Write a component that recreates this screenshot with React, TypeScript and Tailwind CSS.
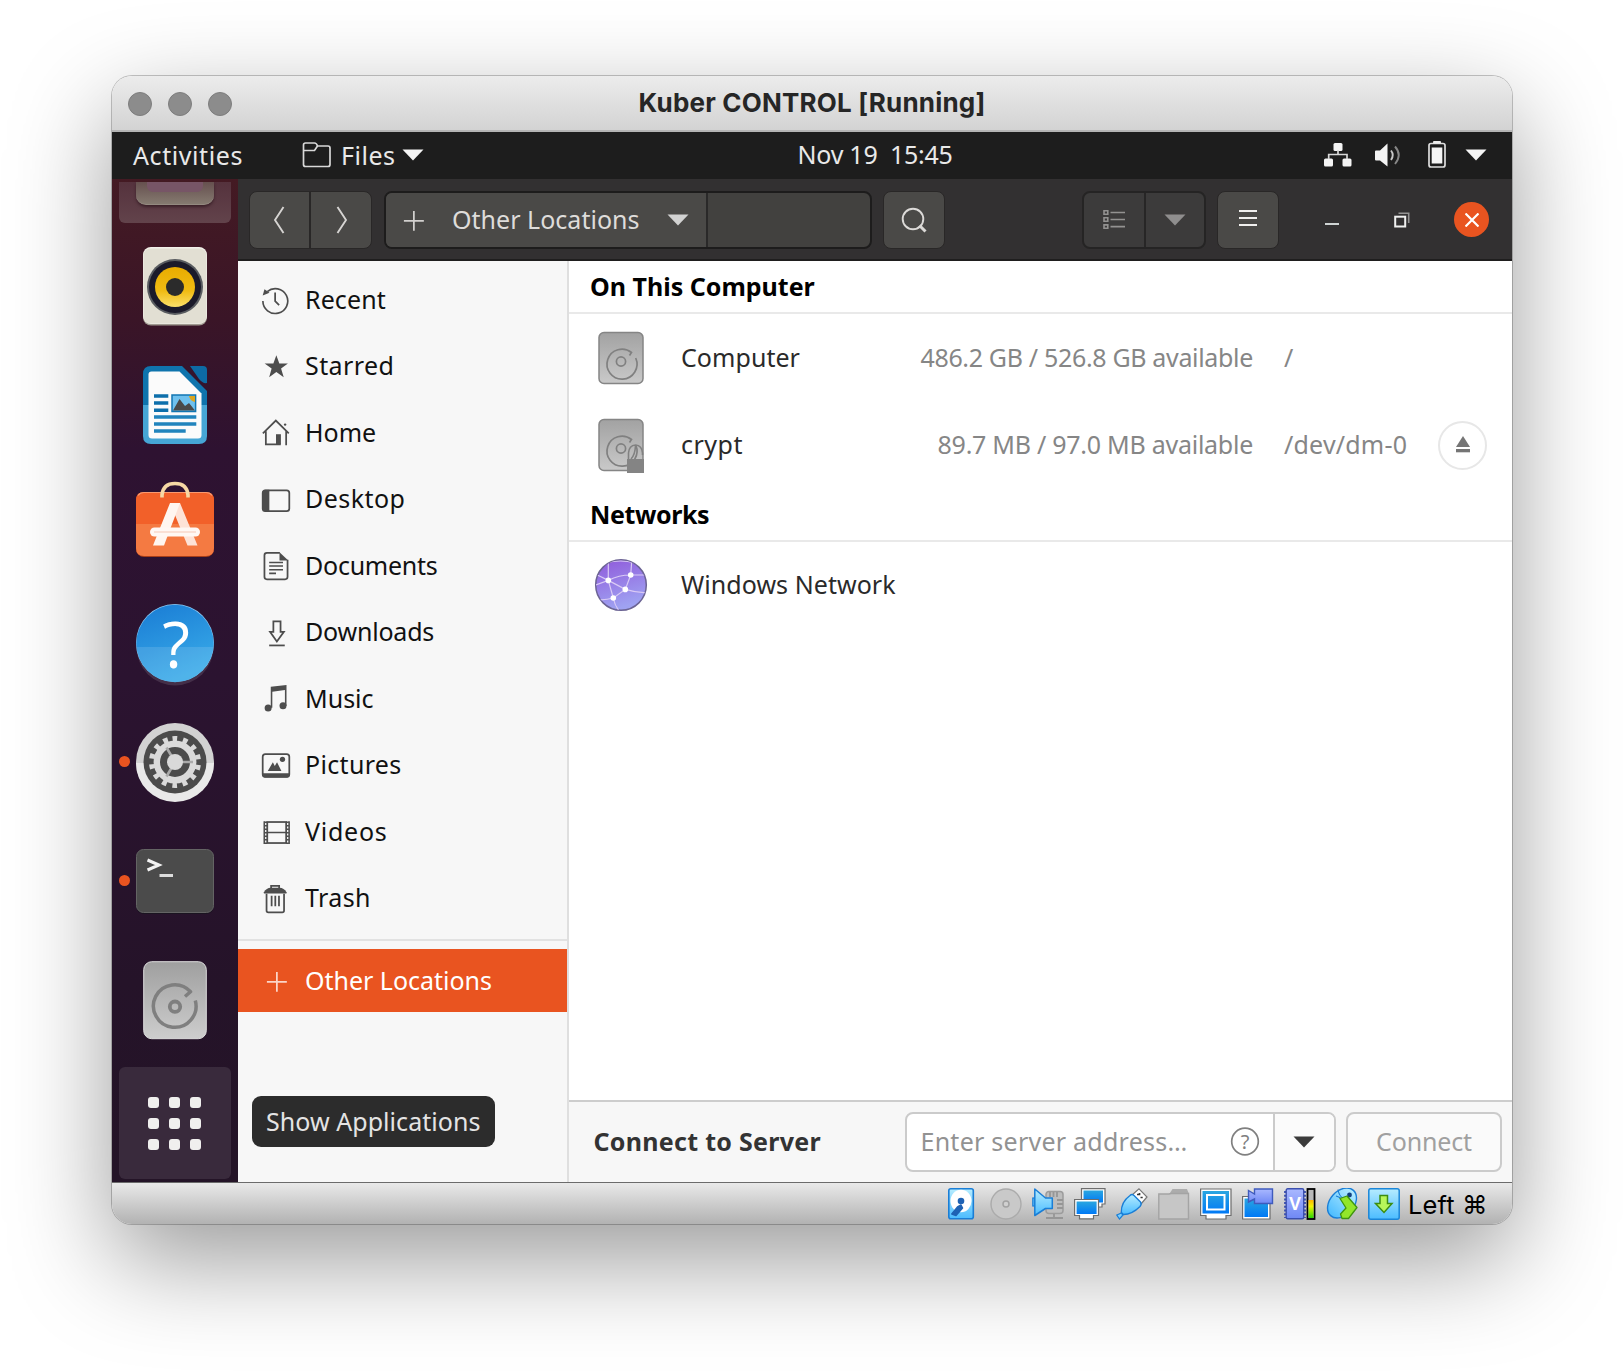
import type { ReactNode } from "react";

/* ---------- sidebar symbols, 16-unit grid ---------- */

function Sym({ children }: { children: ReactNode }) {
  return (
    <svg viewBox="0 0 16 16" className="h-7 w-7 shrink-0 overflow-visible" fill="none" stroke="#4d4d4d" strokeWidth="1">
      {children}
    </svg>
  );
}

const RecentIcon = () => (
  <Sym>
    <path d="M3 3.2A7.1 7.1 0 1 1 .5 8.6" strokeWidth=".95" />
    <path d="M1.4 1.9 4.3 3.9.4 5.4Z" fill="#4d4d4d" stroke="none" />
    <path d="M7.5 3.7v5l2.3 2.2" />
  </Sym>
);
const StarIcon = () => (
  <Sym>
    <path
      d="M8.2 1.3 9.9 6h4.9l-3.9 2.9 1.5 4.9-4.2-3-4.1 3L5.5 8.9 1.5 6h5Z"
      fill="#4d4d4d"
      stroke="none"
    />
  </Sym>
);
const HomeIcon = () => (
  <Sym>
    <path d="M.5 8.2 7.9.9l7.4 7.3M2.2 7v7.5h8.500M13.800 7v8" />
    <path d="M8 8.700h2.800v5.800H8Z" fill="#4d4d4d" stroke="none" />
    <circle cx="13.2" cy="3.2" r=".7" fill="#4d4d4d" stroke="none" />
  </Sym>
);
const DesktopIcon = () => (
  <Sym>
    <rect x=".4" y="2.5" width="15.2" height="11.8" rx="1.5" />
    <path d="M1.5 2.2H4.2V14.6H1.5L.1 13.4V3.4Z" fill="#4d4d4d" stroke="none" />
  </Sym>
);
const DocumentsIcon = () => (
  <Sym>
    <path d="M10.2.5H2.8Q1.4.5 1.4 1.9V14.2Q1.4 15.6 2.8 15.6H13.2Q14.6 15.6 14.6 14.2V4.4" />
    <path d="M10 .1V4.8H15Z" fill="#4d4d4d" stroke="none" />
    <path d="M4.1 6H12M4.1 8H12M4.1 10.1H12M4.1 12.2H8" strokeWidth=".9" />
  </Sym>
);
const DownloadsIcon = () => (
  <Sym>
    <path d="M6.5 1.3h4.1v6h1.9l-4 5.5-3.9-5.5h1.9Z" />
    <path d="M4.1 15.1H13" />
  </Sym>
);
const MusicIcon = () => (
  <Sym>
    <circle cx="3.5" cy="13.1" r="2" fill="#4d4d4d" stroke="none" />
    <circle cx="12" cy="11.9" r="2" fill="#4d4d4d" stroke="none" />
    <path d="M5 13V1L14 0V12H13.1V2.9L5.9 3.8V13Z" fill="#4d4d4d" stroke="none" />
  </Sym>
);
const PicturesIcon = () => (
  <Sym>
    <rect x=".4" y="1.2" width="15.2" height="13" rx="1.5" />
    <path d="M.1 12.1H15.9V13.4L14.7 14.6H1.3L.1 13.4Z" fill="#4d4d4d" stroke="none" />
    <path d="M3.3 10.9 6.2 5.9 7.3 8 8.6 5.9 11.1 10.9Z" fill="#4d4d4d" stroke="none" />
    <circle cx="11.7" cy="4.2" r="1.5" fill="#4d4d4d" stroke="none" />
  </Sym>
);
const VideosIcon = () => (
  <Sym>
    <rect x="3" y="2.3" width="10.8" height="12" />
    <path d="M3 8.3H13.8M1.3 1.8V14.8M15.5 1.8V14.8" strokeWidth=".9" />
    <path d="M2.2 2V14.8M14.6 2V14.8" strokeDasharray=".9 1.1" strokeWidth="1.5" />
  </Sym>
);
const TrashIcon = () => (
  <Sym>
    <path d="M5.2 2V.5H9.8V2" />
    <path d="M1.1 4.9V4.1Q2.5 1.6 5 1.5H10Q12.6 1.6 14 4.1V4.9Z" fill="#4d4d4d" stroke="none" />
    <path d="M2.6 5V14.6Q2.6 15.6 3.6 15.6H11.6Q12.6 15.6 12.6 14.6V5M5.5 6.2V12.2M7.6 6.2V12.2M9.7 6.2V12.2" />
  </Sym>
);
const PlusIcon = ({ color }: { color: string }) => (
  <svg viewBox="0 0 16 16" className="h-7 w-7 shrink-0" fill="none" stroke={color} strokeWidth="1">
    <path d="M2.8 8.5H14.2M8.5 2.8V14.2" />
  </svg>
);

const Caret = ({ color }: { color: string }) => (
  <svg viewBox="0 0 22 12" className="h-3 w-[22px] shrink-0">
    <path d="M.5.5H21.5L11 11.5Z" fill={color} />
  </svg>
);

/* ---------- dock launchers, 84px tiles ---------- */

function Tile({ children }: { children: ReactNode }) {
  return (
    <svg viewBox="0 0 84 84" className="h-[84px] w-[84px] overflow-visible" fill="none">
      {children}
    </svg>
  );
}

const MusicPlayer = () => (
  <Tile>
    <defs>
      <linearGradient id="cone" x1="0" y1="0" x2="0" y2="1">
        <stop offset="0" stopColor="#e9ac00" />
        <stop offset=".6" stopColor="#f0bb13" />
        <stop offset="1" stopColor="#fbe06a" />
      </linearGradient>
    </defs>
    <rect x="10" y="3.5" width="64" height="78" rx="8" fill="#a09a90" />
    <rect x="10" y="3" width="64" height="77" rx="8" fill="#f2f0ea" />
    <rect x="10.5" y="4.5" width="63" height="75" rx="7" fill="#e2dfd3" />
    <circle cx="42" cy="43" r="28" fill="#595c60" />
    <circle cx="42" cy="43" r="26" fill="#1b1a2a" />
    <circle cx="42" cy="43" r="20" fill="url(#cone)" />
    <circle cx="42" cy="43" r="9" fill="#2b2b2b" />
  </Tile>
);
const Writer = () => (
  <Tile>
    <path d="M18 3H49L74 28V42H10V11Q10 3 18 3Z" fill="#0f74ad" />
    <path d="M10 42H74V73Q74 81 66 81H18Q10 81 10 73Z" fill="#46a6d5" />
    <path d="M57 3H70Q74 3 74 7V20Q70 21 66 16Z" fill="#0d6ba4" />
    <path d="M18.5 8.5H46.5L68.5 30.5V72Q68.5 75.5 65 75.5H19Q15.5 75.5 15.5 72V11.5Q15.5 8.5 18.5 8.5Z" fill="#fbfbfb" />
    <path d="M21 33H35.3M21 40H35.3M21 47.2H35.3" stroke="#0d6fab" strokeWidth="3.4" />
    <path d="M21 54H63.3M21 61H63.3M21 68H52.7" stroke="#2184bd" strokeWidth="3.4" />
    <rect x="39" y="32" width="23.6" height="16.5" fill="#6fc1ee" stroke="#1276b2" strokeWidth="1.5" />
    <path d="M40 47.5 46.5 36 52 43 56 40 62 47.5Z" fill="#4a4a4a" />
    <path d="M56 33H62V39Q57 38 56 33Z" fill="#dba520" />
  </Tile>
);
const Software = () => (
  <Tile>
    <rect x="3" y="11" width="78" height="64" rx="8" fill="#a93e17" />
    <path d="M11 10H73Q81 10 81 18V42H3V18Q3 10 11 10Z" fill="#f26029" />
    <path d="M3 42H81V66Q81 74 73 74H11Q3 74 3 66Z" fill="#f47a42" />
    <path d="M5 13.5Q7 10.5 11 10.5H73Q77 10.5 79 13.5" stroke="#f99a70" strokeWidth="1.2" />
    <path d="M29 15.5V13Q30 1.5 42 1.5T55 13V15.5" stroke="#f6d8a4" strokeWidth="3.6" />
    <path d="M37 21H47L64.5 63.5H54.5L42 33Z" fill="#fde3d7" />
    <path d="M37 21H47L31 63.5H20Z" fill="#fff6f0" />
    <rect x="17" y="45.5" width="50" height="9" rx="4.5" fill="#fff8f4" />
    <path d="M21 50H63" stroke="#f8d9cb" strokeWidth="1.5" />
  </Tile>
);
const Help = () => (
  <Tile>
    <defs>
      <linearGradient id="help" x1="0" y1="0" x2=".4" y2="1">
        <stop offset="0" stopColor="#197bd4" />
        <stop offset="1" stopColor="#37a9e8" />
      </linearGradient>
    </defs>
    <circle cx="42" cy="42" r="39" fill="#8cc8f2" />
    <circle cx="42" cy="42.5" r="38.7" fill="url(#help)" />
    <path d="M3.5 46H80.5A38.5 38.5 0 0 1 3.5 46Z" fill="#fff" opacity=".12" />
    <text x="43" y="67" textAnchor="middle" className="font-['Open_Sans'] text-[64px]" fill="#fff">
      ?
    </text>
  </Tile>
);
const Settings = () => (
  <Tile>
    <circle cx="42" cy="42" r="39" fill="#d2d2d2" />
    <path d="M3 43A39 39 0 0 0 81 43Z" fill="#e9e9e9" />
    <circle cx="42" cy="42" r="31.5" fill="#4b4b4b" />
    <circle cx="42" cy="42" r="23" stroke="#d9d9d9" strokeWidth="6" strokeDasharray="4.6 5.722" transform="rotate(-96 42 42)" />
    <circle cx="42" cy="42" r="18.2" stroke="#dadada" strokeWidth="6.4" />
    <path d="M42 42H60M42 42 33.5 27.5M42 42 33.5 56.5" stroke="#a9a9a9" strokeWidth="2.6" />
    <circle cx="42" cy="42" r="8" fill="#d9d9d9" />
  </Tile>
);
const Terminal = () => (
  <Tile>
    <rect x="3" y="11" width="78" height="64" rx="8" fill="#1a1420" />
    <rect x="3.5" y="10.5" width="77" height="63" rx="7" fill="#4b4b4b" stroke="#646464" />
    <path d="M14.5 21 26 26 14.5 31" stroke="#f4f4f4" strokeWidth="3" />
    <path d="M26.5 36.5H40" stroke="#dcdcdc" strokeWidth="3" />
  </Tile>
);
const Disk = () => (
  <Tile>
    <defs>
      <linearGradient id="disk" x1="0" y1="0" x2="0" y2="1">
        <stop offset="0" stopColor="#9f9f9f" />
        <stop offset="1" stopColor="#cdcdcd" />
      </linearGradient>
    </defs>
    <rect x="10.7" y="3.7" width="62.6" height="77" rx="8" fill="url(#disk)" stroke="#dcdcdc" />
    <path d="M52 38.5 57.5 33.7A21.3 21.3 0 1 0 62.3 42.5" stroke="#7f7f7f" strokeWidth="3.5" strokeLinejoin="round" />
    <circle cx="42" cy="48.7" r="5.2" stroke="#7f7f7f" strokeWidth="3.8" />
  </Tile>
);

const dockItems: { name: string; icon: ReactNode; running?: boolean }[] = [
  { name: "Rhythmbox", icon: <MusicPlayer /> },
  { name: "LibreOffice Writer", icon: <Writer /> },
  { name: "Ubuntu Software", icon: <Software /> },
  { name: "Help", icon: <Help /> },
  { name: "Settings", icon: <Settings />, running: true },
  { name: "Terminal", icon: <Terminal />, running: true },
  { name: "Disk", icon: <Disk /> },
];

function Dock() {
  return (
    <nav className="flex w-[126px] shrink-0 flex-col items-center bg-[linear-gradient(180deg,#441a23_0%,#3a1527_14%,#2e1231_27%,#2b1330_50%,#251329_80%,#241427_100%)]">
      <div className="mt-[3px] flex h-[41px] w-28 justify-center rounded-b-md bg-linear-to-b from-[#55323d] to-[#62434b]">
        <div className="flex h-[23px] w-[78px] justify-center rounded-b-[10px] border-b border-[#948a80] bg-linear-to-b from-[#66504f] to-[#857a70] shadow-[0_2px_3px_#3a2028]">
          <div className="h-[10px] w-14 rounded-b-md bg-[#775566]" />
        </div>
      </div>
      <div className="mt-[3px] w-full">
        {dockItems.map((d) => (
          <div key={d.name} aria-label={d.name} className="grid h-[119px] grid-cols-[21px_84px_21px] items-center">
            <span className="flex justify-end pr-[3px]">
              {d.running && <span className="h-[11px] w-[11px] rounded-full bg-[#e95420]" />}
            </span>
            {d.icon}
          </div>
        ))}
      </div>
      <div className="mt-[8px] grid h-28 w-28 place-content-center rounded-md bg-[#392a3c]">
        <div className="mr-px grid grid-cols-3 gap-[10px]">
          {Array.from({ length: 9 }, (_, i) => (
            <span key={i} className="h-[11px] w-[11px] rounded-[3px] bg-[#f0efee]" />
          ))}
        </div>
      </div>
    </nav>
  );
}

/* ---------- GNOME top panel ---------- */

function TopPanel() {
  return (
    <div className="flex h-[47px] items-center bg-[#1d1d1d] pb-[2px] text-[#e9e9e9]">
      <span className="ml-[21px] w-[169px] tracking-[0.58px]">Activities</span>
      <svg viewBox="0 0 29 26" className="h-[26px] w-[29px]" fill="none" stroke="#d8d8d8" strokeWidth="1.7">
        <path d="M1.5 9V3Q1.5 1 3.5 1H12.5Q14.5 1 15.5 4H26Q28 4 28 6V22.5Q28 24.5 26 24.5H3.5Q1.5 24.5 1.5 22.5V8.5H12.5L15.5 4" />
      </svg>
      <span className="ml-[10px] w-[60.5px] tracking-[0.5px]">Files</span>
      <Caret color="#f5f5f5" />
      <span className="mb-[2px] ml-[374px] w-[526.5px] tracking-[-0.25px] whitespace-pre">Nov 19  15:45</span>
      <svg viewBox="0 0 28 26" className="h-[26px] w-7" fill="#f4f4f4">
        <rect x="9.5" y="1" width="9" height="8" rx="1.5" />
        <rect x="0" y="16.5" width="9" height="8" rx="1.5" />
        <rect x="18.5" y="16.5" width="9" height="8" rx="1.5" />
        <path d="M14 8V12.5M4.7 17V12.5H23V17" fill="none" stroke="#d8d8d8" strokeWidth="1.7" />
      </svg>
      <svg viewBox="0 0 28 26" className="ml-[22px] h-[26px] w-7" fill="#f4f4f4">
        <path d="M2 8.5H6L13.5 1.5V24.5L6 18.5H2Q1 18.5 1 17.5V9.5Q1 8.5 2 8.5Z" />
        <path d="M17 8.5Q20.5 13 17 18" fill="none" stroke="#c8c8c8" strokeWidth="1.9" />
        <path d="M21 4.5Q28.5 13 21 22" fill="none" stroke="#868686" strokeWidth="1.9" />
      </svg>
      <svg viewBox="0 0 20 28" className="mb-[2px] ml-[24.5px] h-7 w-5" fill="none">
        <rect x="2" y="3.5" width="16" height="23.5" rx="2" stroke="#dedede" strokeWidth="1.7" />
        <rect x="6" y="1" width="8" height="2.5" rx="1" fill="#eee" />
        <rect x="4.7" y="7.5" width="10.6" height="16" fill="#f4f4f4" />
      </svg>
      <span className="ml-[18.5px]">
        <Caret color="#f5f5f5" />
      </span>
    </div>
  );
}

/* ---------- Files header bar ---------- */

function HeaderBar() {
  return (
    <header className="flex h-[82px] items-start border-b-2 border-[#1f1e1e] bg-[#323031] pt-[12px] text-[#dedcda]">
      <div className="ml-[11px] flex h-[58px] rounded-lg border border-[#292727] bg-[#4a4947]">
        <span className="grid w-[61px] place-items-center border-r-2 border-[#292727] pr-[2px]">
          <svg viewBox="0 0 12 28" className="h-7 w-3" fill="none" stroke="#d6d4d2" strokeWidth="1.9">
            <path d="M10.5 1 2 14 10.5 27" />
          </svg>
        </span>
        <span className="grid w-[60px] place-items-center pl-[2px]">
          <svg viewBox="0 0 12 28" className="h-7 w-3" fill="none" stroke="#d6d4d2" strokeWidth="1.9">
            <path d="M1.5 1 10 14 1.5 27" />
          </svg>
        </span>
      </div>

      <div className="ml-[12px] flex h-[58px] w-[488px] overflow-hidden rounded-lg border-2 border-[#1d1c1c] bg-[#42413f]">
        <div className="flex w-[322px] items-center border-r-2 border-[#2a2929] bg-[#4a4947] pl-[13px]">
          <PlusIcon color="#d2d0ce" />
          <span className="mb-[3px] ml-[24px] w-[215.5px] pl-px tracking-[0.02px]">Other Locations</span>
          <Caret color="#d2d2d2" />
        </div>
      </div>

      <div className="ml-[11px] grid h-[58px] w-[62px] place-items-center rounded-lg border border-[#292727] bg-[#4a4947]">
        <svg viewBox="0 0 26 26" className="mb-px h-[26px] w-[26px]" fill="none" stroke="#dcdad8">
          <circle cx="12" cy="12" r="10.3" strokeWidth="1.9" />
          <path d="M18.5 18.5 24.5 24.5" strokeWidth="3" />
        </svg>
      </div>

      <div className="ml-[136.5px] flex h-[58px] w-[124px] overflow-hidden rounded-lg border-2 border-[#252424] bg-[#3c3b3b]">
        <span className="grid w-[62px] place-items-center border-r-2 border-[#272626] pb-px">
          <svg viewBox="0 0 22 22" className="h-[22px] w-[22px]" fill="none" stroke="#939291" strokeWidth="1.6">
            <path d="M1 1.8H4.8V5.2H1ZM1 8.8H4.8V12.2H1ZM1 15.9H4.8V19.3H1ZM7.5 3.5H22M7.5 10.5H22M7.5 17.6H22" />
          </svg>
        </span>
        <span className="grid flex-1 place-items-center">
          <Caret color="#8f8e8e" />
        </span>
      </div>

      <div className="ml-[11.5px] grid h-[58px] w-[62px] place-items-center rounded-lg border border-[#292727] bg-[#4a4947]">
        <svg viewBox="0 0 18 18" className="mb-[4px] h-[18px] w-[18px]" stroke="#f0efee" strokeWidth="2">
          <path d="M0 2H18M0 9H18M0 16H18" />
        </svg>
      </div>

      <div className="flex h-[58px] flex-1 items-center pb-px">
        <span className="mt-[9px] ml-[46px] h-[2px] w-[14px] bg-[#cfd3d3]" />
        <svg viewBox="0 0 16 16" className="ml-[55px] h-4 w-4" fill="none">
          <path d="M4.5 1.2H14.7V11" stroke="#949393" strokeWidth="1.6" />
          <rect x="1.2" y="4.7" width="10" height="9.8" stroke="#f0f0f0" strokeWidth="2" />
        </svg>
        <span className="ml-[44px] grid h-[35px] w-[35px] place-items-center rounded-full bg-[#e95420]">
          <svg viewBox="0 0 14 14" className="h-[14px] w-[14px]" stroke="#fff" strokeWidth="2.2">
            <path d="M.5.5 13.5 13.5M13.5.5.5 13.5" />
          </svg>
        </span>
      </div>
    </header>
  );
}

/* ---------- Files sidebar ---------- */

function Place({ icon, children }: { icon: ReactNode; children: ReactNode }) {
  return (
    <div className="flex h-[66.5px] items-center gap-[15px] pl-[24px]">
      {icon}
      <span className="pb-[3px]">{children}</span>
    </div>
  );
}

function Sidebar() {
  return (
    <aside className="flex w-[331px] shrink-0 flex-col border-r-2 border-[#dfdfdf] bg-[#f7f7f7] pt-[6px] text-[#111]">
      <Place icon={<RecentIcon />}>
        <span className="tracking-[0.1px]">Recent</span>
      </Place>
      <Place icon={<StarIcon />}>
        <span className="tracking-[0.4px]">Starred</span>
      </Place>
      <Place icon={<HomeIcon />}>
        <span className="tracking-[0px]">Home</span>
      </Place>
      <Place icon={<DesktopIcon />}>
        <span className="tracking-[0.45px]">Desktop</span>
      </Place>
      <Place icon={<DocumentsIcon />}>
        <span className="tracking-[-0.25px]">Documents</span>
      </Place>
      <Place icon={<DownloadsIcon />}>
        <span className="tracking-[-0.2px]">Downloads</span>
      </Place>
      <Place icon={<MusicIcon />}>
        <span>Music</span>
      </Place>
      <Place icon={<PicturesIcon />}>
        <span className="tracking-[0.32px]">Pictures</span>
      </Place>
      <Place icon={<VideosIcon />}>
        <span className="tracking-[0.75px]">Videos</span>
      </Place>
      <Place icon={<TrashIcon />}>
        <span className="tracking-[0.38px]">Trash</span>
      </Place>
      <div className="mt-[7px] border-t-2 border-[#e2e2e2]" />
      <div className="mt-[8px] flex h-[63px] items-center gap-[15px] bg-[#e95420] pl-[24px] text-white">
        <PlusIcon color="#fbd5c8" />
        <span className="pb-[2px] tracking-[-0.02px]">Other Locations</span>
      </div>
    </aside>
  );
}

/* ---------- Locations list ---------- */

function DriveIcon({ locked }: { locked?: boolean }) {
  return (
    <svg viewBox="0 0 56 56" className="h-14 w-14" fill="none">
      <defs>
        <linearGradient id="drive" x1="0" y1="0" x2="0" y2="1">
          <stop offset="0" stopColor="#a2a2a2" />
          <stop offset="1" stopColor="#c9c9c9" />
        </linearGradient>
      </defs>
      <rect x="6" y="2.5" width="44" height="51" rx="5" fill="url(#drive)" stroke="#858585" strokeWidth="1.5" />
      <path d="M36.5 25.5 38.5 22.5A15 15 0 1 0 42.7 28" stroke="#808080" strokeWidth="1.7" />
      <circle cx="28" cy="31.5" r="4.6" stroke="#808080" strokeWidth="1.7" />
      {locked && (
        <>
          <path d="M35.5 42V36Q36 28.5 42.5 28Q49 28.5 49.5 36V38M38 42Q42 38 42.5 29" stroke="#818181" strokeWidth="1.6" />
          <rect x="34" y="42" width="17" height="14" fill="#848484" />
        </>
      )}
    </svg>
  );
}

const GlobeIcon = () => (
  <svg viewBox="0 0 56 56" className="h-14 w-14" fill="none">
    <defs>
      <linearGradient id="globe" x1="0" y1="0" x2=".3" y2="1">
        <stop offset="0" stopColor="#8f58da" />
        <stop offset="1" stopColor="#9fa2f2" />
      </linearGradient>
      <clipPath id="globeClip">
        <circle cx="28" cy="28" r="25" />
      </clipPath>
    </defs>
    <circle cx="28" cy="28" r="25.3" fill="url(#globe)" stroke="#6c6494" strokeWidth="1.5" />
    <g clipPath="url(#globeClip)" stroke="#d9caf5" strokeWidth="1.2">
      <path d="M15.3 0V23.4L20.3 41Q22 50 28 56M39 0 37.7 18 32.300 32.400 20.300 41Q10 44 0 42M0 16 15.300 23.400 32.300 32.400Q44 36 56 36M0 29 15.300 23.400Q26 18 37.700 18H56M12 6Q28 2 42 6" />
    </g>
    <g fill="#fff">
      <circle cx="15.3" cy="23.4" r="2.8" />
      <circle cx="37.7" cy="18" r="2.8" />
      <circle cx="32.3" cy="32.4" r="2.8" />
      <circle cx="20.3" cy="41" r="2.8" />
    </g>
  </svg>
);

function Locations() {
  return (
    <section className="flex-1">
      <h2 className="h-[53px] border-b-2 border-[#e9e9e9] pl-[21px] leading-[51px] font-bold text-black">On This Computer</h2>
      <div className="flex h-[87.5px] items-center pl-[24px] text-[#868686]">
        <DriveIcon />
        <span className="ml-[32px] w-[239px] pb-[2px] tracking-[0.05px] text-[#2a2a2a]">Computer</span>
        <span className="w-[333px] pb-[2px] text-right tracking-[-0.33px]">486.2 GB / 526.8 GB available</span>
        <span className="ml-[31px] pb-[2px]">/</span>
      </div>
      <div className="flex h-[87.5px] items-center pl-[24px] text-[#868686]">
        <DriveIcon locked />
        <span className="ml-[32px] w-[239px] pb-[2px] tracking-[0.5px] text-[#2a2a2a]">crypt</span>
        <span className="w-[333px] pb-[2px] text-right tracking-[-0.26px]">89.7 MB / 97.0 MB available</span>
        <span className="ml-[31px] w-[154px] pb-[2px] tracking-[0.2px]">/dev/dm-0</span>
        <span className="grid h-[49px] w-[49px] place-items-center rounded-full border-2 border-[#e7e7e7] bg-white">
          <svg viewBox="0 0 16 18" className="h-[18px] w-4" fill="#757575">
            <path d="M8 0 15 11H1Z" />
            <rect x="1" y="13" width="14" height="3.3" />
          </svg>
        </span>
      </div>
      <h2 className="h-[52.5px] border-b-2 border-[#e9e9e9] pl-[21px] leading-[51px] font-bold tracking-[-0.4px] text-black">
        Networks
      </h2>
      <div className="flex h-[87.5px] items-center pl-[24px]">
        <GlobeIcon />
        <span className="ml-[32px] pb-[2px] tracking-[0.05px] text-[#2a2a2a]">Windows Network</span>
      </div>
    </section>
  );
}

function ConnectBar() {
  return (
    <div className="flex h-[82px] items-start border-t-2 border-[#cdcdcd] bg-[#f7f7f7] pt-[10px]">
      <span className="ml-[24.5px] w-[311px] leading-[58px] font-bold tracking-[0.29px] text-[#333]">Connect to Server</span>
      <div className="flex h-[60px] w-[431px] overflow-hidden rounded-lg border-2 border-[#cbcbcb] bg-white">
        <div className="flex w-[368px] items-center border-r-2 border-[#cbcbcb] pl-[14px] text-[#929292]">
          <span className="w-[309px] pb-[3px] tracking-[0.25px]">Enter server address…</span>
          <svg viewBox="0 0 30 30" className="h-[30px] w-[30px] overflow-visible" fill="none">
            <circle cx="15" cy="14.5" r="13.3" stroke="#808080" strokeWidth="1.7" />
            <text x="15" y="21.5" textAnchor="middle" className="font-['Noto_Sans'] text-[20px]" fill="#808080">
              ?
            </text>
          </svg>
        </div>
        <span className="grid flex-1 place-items-center bg-[#fbfbfb] pr-px">
          <Caret color="#3b3b3b" />
        </span>
      </div>
      <div className="ml-[10.5px] h-[60px] w-[156px] rounded-lg border-2 border-[#cbcbcb] bg-[#fafafa] text-center leading-[54px] tracking-[-0.15px] text-[#a0a0a0]">
        Connect
      </div>
    </div>
  );
}

/* ---------- VirtualBox status bar ---------- */

function Ind({ children }: { children: ReactNode }) {
  return (
    <svg viewBox="0 0 32 32" className="h-8 w-8 shrink-0" fill="none">
      {children}
    </svg>
  );
}

const IndicatorPaints = () => (
  <svg className="absolute h-0 w-0">
    <defs>
      <linearGradient id="sky" x1="0" y1="0" x2="0" y2="1">
        <stop offset="0" stopColor="#b6ecff" />
        <stop offset="1" stopColor="#4bbcff" />
      </linearGradient>
      <linearGradient id="screen" x1="0" y1="0" x2="0" y2="1">
        <stop offset="0" stopColor="#2aa6e0" />
        <stop offset="1" stopColor="#0079f6" />
      </linearGradient>
      <linearGradient id="violet" x1="0" y1="0" x2="0" y2="1">
        <stop offset="0" stopColor="#a9b8ff" />
        <stop offset="1" stopColor="#6f88f5" />
      </linearGradient>
      <linearGradient id="load" x1="0" y1="0" x2="0" y2="1">
        <stop offset="0" stopColor="#ffb400" />
        <stop offset=".35" stopColor="#f4f400" />
        <stop offset="1" stopColor="#2cd800" />
      </linearGradient>
    </defs>
  </svg>
);

function StatusBar() {
  return (
    <footer className="relative flex h-[42px] items-center gap-[10px] border-t border-[#6b6b6b] bg-linear-to-b from-[#e9e9e9] to-[#b2b2b2] pl-[836px]">
      <IndicatorPaints />
      <Ind>
        <rect x=".8" y=".8" width="24.5" height="30" rx="2" fill="url(#sky)" stroke="#1a7ed6" strokeWidth="1.6" />
        <ellipse cx="13" cy="13" rx="10.5" ry="11.3" fill="#fff" />
        <circle cx="13" cy="13" r="3.3" fill="#1e62b4" />
        <path d="M13 17 9.5 19 3.8 26 8 27.5 14.5 20Z" fill="#1e62b4" stroke="#1e62b4" strokeWidth="1.5" strokeLinejoin="round" />
      </Ind>
      <Ind>
        <circle cx="16" cy="16" r="15" fill="#c9c9c9" stroke="#ababab" strokeWidth="1.4" />
        <circle cx="16" cy="16" r="3" stroke="#a2a2a2" strokeWidth="1.5" fill="#d0d0d0" />
      </Ind>
      <Ind>
        <rect x="14" y="3.5" width="17" height="22" rx="3" fill="#bdbdbd" stroke="#9c9c9c" strokeWidth="1.5" />
        <path d="M18 4V9M21.5 4V9M25 4V9M25 12H31M25 16H31M25 20H31M22 26V29M14 30H31" stroke="#969696" strokeWidth="1.8" />
        <rect x=".8" y="10" width="3" height="8" fill="#5fc4ff" stroke="#1a7ed6" strokeWidth="1.2" />
        <path d="M2.8 1 13.5 10H20.3V20.5H13.5L2.8 27.5Z" fill="url(#sky)" stroke="#1a7ed6" strokeWidth="1.5" strokeLinejoin="round" />
      </Ind>
      <Ind>
        <path d="M7.5.6H31V16H28V19H22L7.5 16Z" fill="#fff" stroke="#6d6d6d" strokeWidth="1.2" />
        <rect x="9.5" y="2.5" width="19.5" height="12" fill="url(#screen)" />
        <path d="M.6 11.5H24.5V27.5H19.5V30.8H5.5V27.5H.6Z" fill="#fff" stroke="#6d6d6d" strokeWidth="1.2" />
        <rect x="2.6" y="13.5" width="20" height="12.5" fill="url(#screen)" />
      </Ind>
      <Ind>
        <path d="M23 .8 31 9 25 16 16 7Z" fill="#fff" stroke="#777" strokeWidth="1.2" />
        <path d="M21 6.5h2.2M24.5 9.5h2.2M23.5 5v2.2" stroke="#333" strokeWidth="1.7" />
        <path d="M14 7.5Q16 5.5 18 7.5L24.5 14Q26 16 24 18.5Q16 26.5 7.5 26.5L5.3 24.5Q5 14 14 7.5Z" fill="url(#sky)" stroke="#1a7ed6" strokeWidth="1.4" />
        <path d="M5.3 25 .8 27 3.5 31 7 27Z" fill="#7ad0ff" stroke="#1a7ed6" strokeWidth="1.2" />
      </Ind>
      <Ind>
        <path d="M12 5 14.5 1H29L30.5 5Z" fill="#acacac" />
        <path d="M.8 6H11L13 5.5H30.5V31H.8Z" fill="#c6c6c6" stroke="#a4a4a4" strokeWidth="1.4" />
      </Ind>
      <Ind>
        <path d="M.6 1H31V27.5H26V31H6V27.5H.6Z" fill="#fff" stroke="#6d6d6d" strokeWidth="1.2" />
        <rect x="2.5" y="3" width="26.5" height="22.5" fill="url(#screen)" />
        <rect x="7" y="7" width="17.500" height="14.500" stroke="#fff" strokeWidth="2" />
      </Ind>
      <Ind>
        <path d="M.6 8.5H28V31H.6Z" fill="#fff" stroke="#6d6d6d" strokeWidth="1.2" />
        <rect x="2.5" y="10.5" width="23.5" height="18.5" fill="url(#screen)" />
        <path d="M6.5 2.5 12.5 6V1H30.5V15.5H12.5V11L6.5 14Z" fill="url(#violet)" stroke="#3f5bbd" strokeWidth="1.4" />
      </Ind>
      <Ind>
        <path d="M1.2 3V30M20.8 3V30" stroke="#3b4fae" strokeWidth="2.2" strokeDasharray="2 1.7" />
        <rect x="2.2" y=".8" width="17.5" height="30" rx="1.5" fill="url(#violet)" stroke="#3b4fae" strokeWidth="1.4" />
        <text x="11" y="22" textAnchor="middle" className="font-['Liberation_Sans'] text-[18px] font-bold" fill="#fff">
          V
        </text>
        <rect x="23.5" y="1" width="7" height="30" fill="#b9b9b9" stroke="#000" strokeWidth="1.8" />
        <rect x="24.5" y="12" width="5" height="18" fill="url(#load)" />
      </Ind>
      <Ind>
        <ellipse cx="16" cy="15" rx="12" ry="17" transform="rotate(42 16 15)" fill="url(#sky)" stroke="#1a7ed6" strokeWidth="1.4" />
        <path d="M10 8Q17 10 20 17M12 1.5Q13 8 17 10" stroke="#1a7ed6" strokeWidth="1.1" />
        <circle cx="23.5" cy="7" r="2.4" fill="#123f80" />
        <path d="M14 10.5 21 8 31 19.5 22.5 30.5H16L14.5 26 20 20Z" fill="#92e62a" stroke="#3f9410" strokeWidth="1.3" strokeLinejoin="round" />
      </Ind>
      <Ind>
        <rect x=".8" y=".8" width="30.4" height="30.4" rx="2" fill="url(#sky)" stroke="#1a86d8" strokeWidth="1.5" />
        <path d="M12 7.5H19.5V15.500H24L16 24.500 7.500 15.500H12Z" fill="#b7f75a" stroke="#3c8d12" strokeWidth="1.5" />
      </Ind>
      <span className="-ml-[2px] pt-[2px] font-['Inter'] text-[25.5px] leading-[32px] tracking-[0.15px] whitespace-nowrap text-black">Left ⌘</span>
    </footer>
  );
}

export default function App() {
  return (
    <div className="h-[1372px] w-[1624px] overflow-hidden bg-white px-28 pt-[76px] font-['Noto_Sans','Open_Sans',sans-serif] text-[25px] leading-8">
      <div className="flex h-[1148px] w-[1400px] flex-col overflow-hidden rounded-[20px] shadow-[0_0_0_1px_rgba(0,0,0,0.22),0_36px_100px_rgba(0,0,0,0.4)]">
        <div className="grid h-[56px] shrink-0 grid-cols-[1fr_auto_1fr] items-center border-b-2 border-[#b4b4b4] bg-linear-to-b from-[#ececec] to-[#d3d3d3]">
          <div className="flex gap-4 pt-px pl-4">
            <span className="h-6 w-6 rounded-full border border-[#7d7d7d] bg-[#8c8c8c]" />
            <span className="h-6 w-6 rounded-full border border-[#7d7d7d] bg-[#8c8c8c]" />
            <span className="h-6 w-6 rounded-full border border-[#7d7d7d] bg-[#8c8c8c]" />
          </div>
          <h1 className="font-['Inter'] text-[26px] font-bold tracking-[0.2px] text-[#262626]">Kuber CONTROL [Running]</h1>
        </div>

        <TopPanel />
        <div className="relative flex min-h-0 flex-1">
          <Dock />
          <div className="flex min-w-0 flex-1 flex-col">
            <HeaderBar />
            <div className="flex min-h-0 flex-1">
              <Sidebar />
              <main className="flex min-w-0 flex-1 flex-col bg-white">
                <Locations />
                <ConnectBar />
              </main>
            </div>
          </div>
          <div className="absolute bottom-[35px] left-[140px] h-[51px] w-[243px] rounded-[9px] bg-[#2c2c2c] pl-[14px] leading-[51px] tracking-[0.05px] text-[#e4e4e4]">
            Show Applications
          </div>
        </div>
        <StatusBar />
      </div>
    </div>
  );
}
